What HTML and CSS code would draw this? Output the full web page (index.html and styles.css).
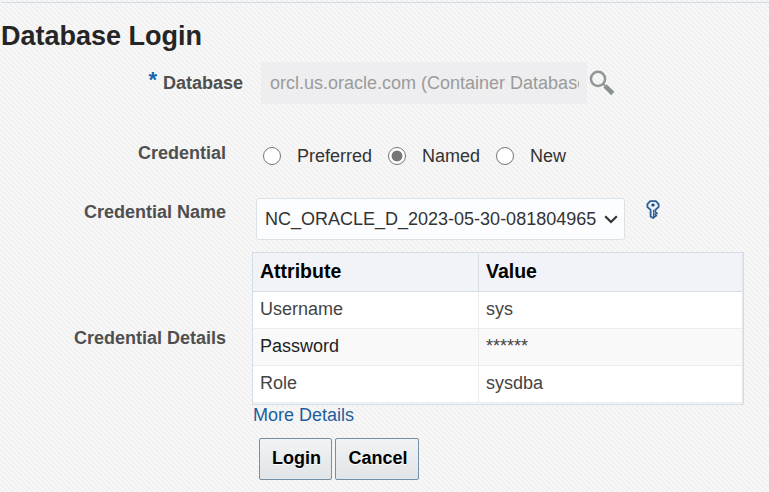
FILE: index.html
```html
<!DOCTYPE html>
<html lang="en">
<head>
<meta charset="utf-8">
<title>Database Login</title>
<link rel="stylesheet" href="styles.css">
</head>
<body>
<main class="page">
  <h1 class="title">Database Login</h1>
  <form class="form">
    <div class="row row-database">
      <label class="label" for="db"><span class="required">*</span>Database</label>
      <input class="database" id="db" value="orcl.us.oracle.com (Container Database)" disabled>
      <svg class="search" width="26" height="26" viewBox="0 0 26 26" fill="none">
        <circle cx="9" cy="8.8" r="7.1" stroke="#929697" stroke-width="2.5"/>
        <path d="M14.3 14.1L16 15.8" stroke="#929697" stroke-width="2"/>
        <path d="M16 15.8L23.8 23.5" stroke="#8b9092" stroke-width="4.6"/>
      </svg>
    </div>
    <div class="row row-credential">
      <span class="label">Credential</span>
      <div class="radios">
        <label class="option"><input class="radio" type="radio" name="c">Preferred</label>
        <label class="option"><input class="radio" type="radio" name="c" checked>Named</label>
        <label class="option"><input class="radio" type="radio" name="c">New</label>
      </div>
    </div>
    <div class="row row-name">
      <span class="label">Credential Name</span>
      <div class="select"><span>NC_ORACLE_D_2023-05-30-081804965</span>
        <svg width="14" height="9" viewBox="0 0 14 9" fill="none"><path d="M1.2 1.3L7 7L12.8 1.3" stroke="#333" stroke-width="2.2"/></svg>
      </div>
      <svg class="key" width="14" height="19" viewBox="0 0 14 19">
        <path d="M4.2 1.2H9.8L12.6 4V7L9.4 9.8V12L10.8 13.4L9.2 14.4L10.2 15.6L7 18L4.6 16.4V9.8L1.4 7V4Z" fill="#e8f1f8" stroke="#2c6096" stroke-width="1.8"/>
        <path d="M7.6 9.8V17" stroke="#2c6096" stroke-width="1.2"/>
        <circle cx="7" cy="5" r="1.6" fill="#123f70"/>
      </svg>
    </div>
    <div class="row row-details">
      <span class="label">Credential Details</span>
      <div class="details">
        <table class="table">
          <thead><tr><th>Attribute</th><th>Value</th></tr></thead>
          <tbody>
            <tr><td>Username</td><td>sys</td></tr>
            <tr class="alt"><td>Password</td><td>******</td></tr>
            <tr><td>Role</td><td>sysdba</td></tr>
          </tbody>
        </table>
      </div>
    </div>
    <div class="more"><a class="link">More Details</a></div>
    <div class="buttons">
      <button class="button" type="button">Login</button>
      <button class="button cancel" type="button">Cancel</button>
    </div>
  </form>
</main>
</body>
</html>
```

FILE: styles.css
```css
* { box-sizing: border-box; }
body {
  margin: 0;
  height: 492px;
  overflow: hidden;
  background: #f9f9f9 linear-gradient(45deg, #f1f1f1 25%, #f9f9f9 25%, #f9f9f9 50%, #f1f1f1 50%, #f1f1f1 75%, #f9f9f9 75%) 0 0 / 5px 5px;
  color: #333;
  font: 18px/22px "Liberation Sans", Arial, sans-serif;
}
.page { margin: 2px 0 0 1px; border-top: 1px solid #d0dce6; }
.title { margin: 17px 0 0; height: 32px; font-size: 27px; line-height: 32px; color: #252525; white-space: nowrap; }
.row { display: flex; align-items: flex-start; }
.label { width: 225px; text-align: right; font-weight: bold; color: #4f4f4f; flex: none; }
.row-database { height: 42px; margin-top: 10px; }
.row-database .label { width: 242px; padding-top: 9px; }
.required { display: inline-block; height: 18px; margin-right: 6px; color: #1566b0; font-size: 22px; line-height: 18px; vertical-align: 2px; }
.database {
  width: 326px; height: 42px; margin-left: 18px; padding: 0 8px 0 9px; border: 0; border-radius: 2px;
  background: #eeeef0; color: #9b9b9b; font: inherit; text-overflow: clip;
}
.search { margin: 8px 0 0 2px; }
.row-credential { height: 22px; margin-top: 38px; }
.radios { display: flex; margin: 3px 0 0 36.5px; }
.option { display: flex; align-items: center; margin-right: 15.5px; }
.radio {
  appearance: none; width: 18px; height: 18px; margin: 0 16.5px 0 0; border: 1.5px solid #767676;
  border-radius: 50%; background: #fff;
}
.radio:checked { background: radial-gradient(circle, #767676 5px, #fff 5.8px); }
.row-name { height: 42px; margin-top: 34px; }
.row-name .label { padding-top: 3px; }
.select {
  display: flex; align-items: center; justify-content: space-between;
  width: 369px; height: 42px; margin-left: 30px; padding: 0 6px 0 8px;
  border: 1px solid #dae2e8; border-radius: 3px; background: #fcfdff;
}
.key { margin: 2px 0 0 21px; }
.row-details { height: 153px; margin-top: 12px; }
.row-details .label { padding-top: 75px; }
.details { width: 492px; height: 153px; margin-left: 26px; border: 1px solid #d5dee7; background: #f4f5f7; }
.table { width: 490px; border-collapse: separate; border-spacing: 0; table-layout: fixed; border-right: 1px solid #dfe5eb; }
.table th { height: 39px; padding: 0 7px 2px; border-bottom: 1px solid #d5dee7; background: #f2f3f8; text-align: left; font-size: 19.5px; color: #000; }
.table th:first-child { width: 226px; border-right: 1px solid #d5dee7; }
.table td { height: 37px; padding: 0 7px 3px; border-bottom: 1px solid #ececec; background: #fff; color: #444; }
.table td:first-child { border-right: 1px solid #ececec; }
.table .alt td { background: #f9f9f9; }
.table .alt td:first-child { color: #222; }
.more { margin: -1px 0 0 252px; height: 23px; }
.link { color: #1d5f9e; }
.buttons { display: flex; gap: 3px; margin: 11px 0 0 258px; }
.button {
  width: 73px; height: 42px; padding: 0 0 3px 2px; border: 1px solid #758fa5; border-radius: 2px;
  background: linear-gradient(#f1f3f4, #e1e5e8); color: #000; font: bold 18px/22px "Liberation Sans", Arial, sans-serif;
  text-shadow: 0 1px 0 #fff;
}
.cancel { width: 84px; }
```
